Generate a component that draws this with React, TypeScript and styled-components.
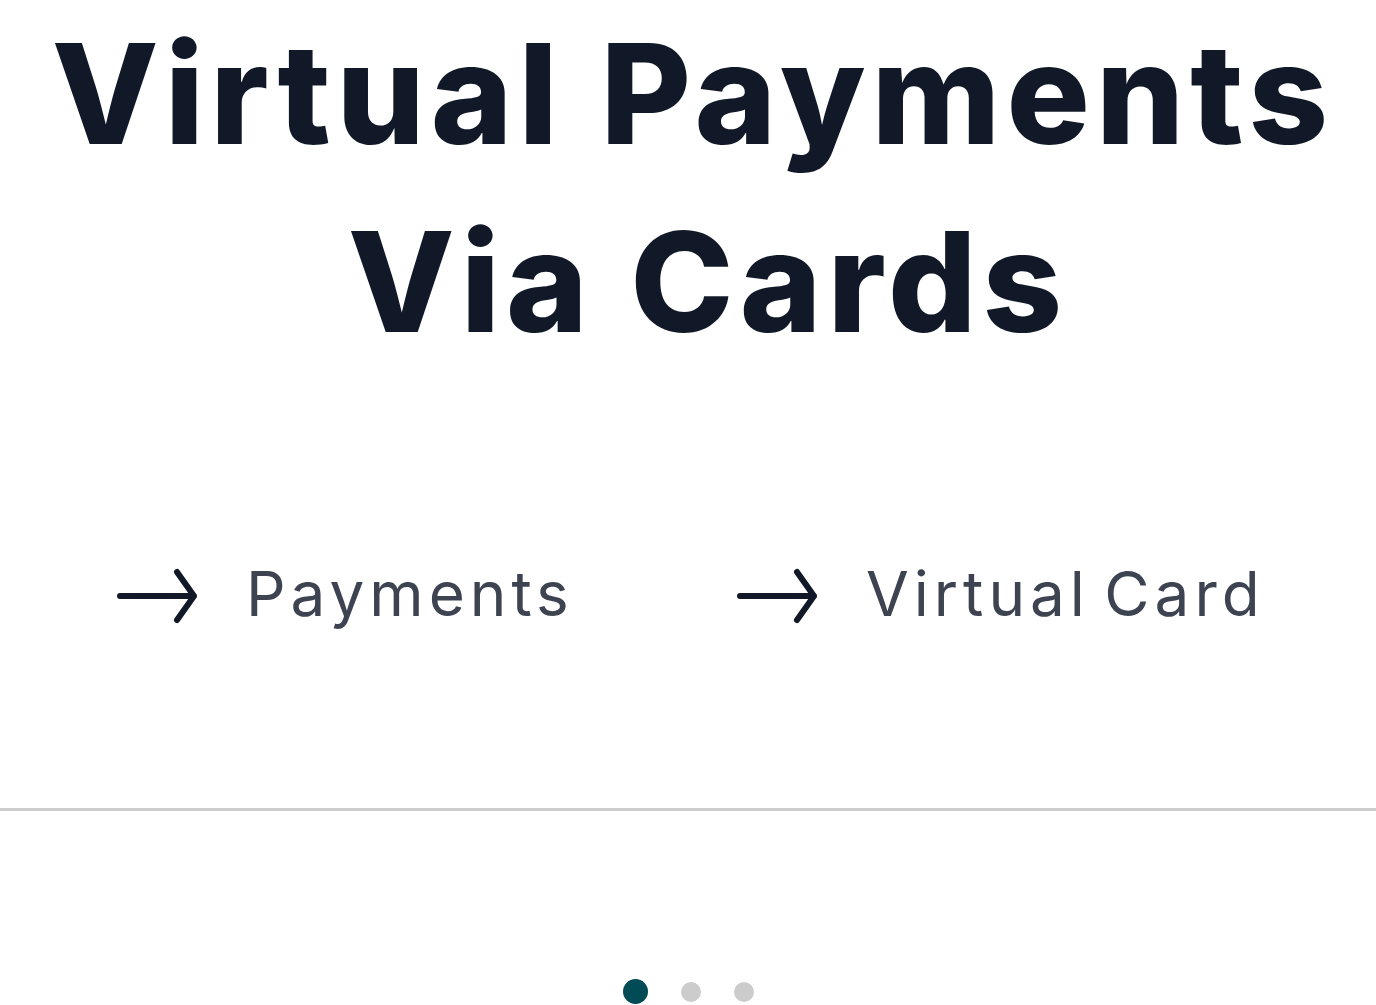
import React from "react";
import styled, { createGlobalStyle } from "styled-components";

const GlobalStyle = createGlobalStyle`
  html, body {
    margin: 0;
    padding: 0;
    background: #ffffff;
  }
  body {
    font-family: Inter, "Noto Sans", "DejaVu Sans", sans-serif;
    overflow: hidden;
  }
`;

const Page = styled.main`
  width: 1376px;
  height: 1005px;
  display: flex;
  flex-direction: column;
  background: #ffffff;
`;

const Title = styled.h1`
  margin: 0;
  text-align: center;
  font-family: Inter, "Noto Sans", sans-serif;
  font-weight: 800;
  font-size: 139px;
  line-height: 188px;
  letter-spacing: 6px;
  color: #111827;
`;

const TitleLine = styled.span<{ $shift: number }>`
  display: block;
  padding-left: ${(p) => p.$shift}px;
`;

const LinkRow = styled.nav`
  margin-top: 180px;
  padding-left: 113px;
  display: grid;
  grid-template-columns: 620px auto;
  align-items: center;
`;

const LinkItem = styled.a`
  display: flex;
  align-items: center;
  gap: 43px;
  text-decoration: none;
  cursor: pointer;
`;

const LinkLabel = styled.span`
  font-family: Inter, "Noto Sans", sans-serif;
  font-weight: 400;
  font-size: 62px;
  line-height: 75px;
  letter-spacing: 5px;
  word-spacing: -8px;
  color: #3d4350;
`;

const ArrowSvg = styled.svg`
  flex: none;
  width: 90px;
  height: 75px;
  color: #111827;
`;

const Divider = styled.hr`
  margin: 177px 0 0;
  border: 0;
  height: 3px;
  background: #cccccc;
`;

const Dots = styled.div`
  margin-top: 168px;
  display: flex;
  justify-content: center;
  align-items: center;
  gap: 33px;
  height: 25px;
`;

const Dot = styled.span<{ $active?: boolean }>`
  width: ${(p) => (p.$active ? "25px" : "20px")};
  height: ${(p) => (p.$active ? "25px" : "20px")};
  border-radius: 50%;
  background: ${(p) => (p.$active ? "#004b55" : "#cccccc")};
`;

const Arrow: React.FC = () => (
  <ArrowSvg viewBox="0 0 90 75" fill="none" aria-hidden="true">
    <path
      d="M7 40H81M64 16L81 40L64 64"
      stroke="currentColor"
      strokeWidth={6}
      strokeLinecap="round"
      strokeLinejoin="round"
    />
  </ArrowSvg>
);

const links = ["Payments", "Virtual Card"];

export default function App() {
  return (
    <>
      <GlobalStyle />
      <Page>
        <Title>
          <TitleLine $shift={10}>Virtual Payments</TitleLine>
          <TitleLine $shift={40}>Via Cards</TitleLine>
        </Title>
        <LinkRow>
          {links.map((l) => (
            <LinkItem key={l}>
              <Arrow />
              <LinkLabel>{l}</LinkLabel>
            </LinkItem>
          ))}
        </LinkRow>
        <Divider />
        <Dots>
          <Dot $active />
          <Dot />
          <Dot />
        </Dots>
      </Page>
    </>
  );
}
